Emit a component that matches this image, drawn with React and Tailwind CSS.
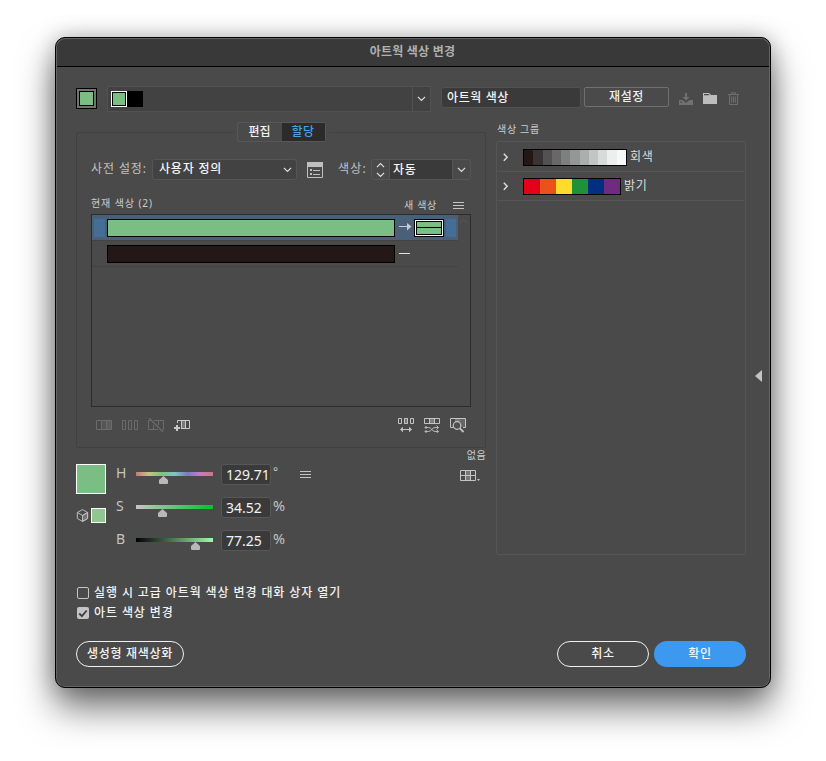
import React, { useState } from 'react';
import clsx from 'clsx';

const GRAYS = ['#231815', '#383433', '#535152', '#686868', '#7f7f7f', '#959696', '#acadad', '#c3c4c4', '#d9dada', '#eeeeee', '#f7f8f8']
const BRIGHTS = ['#e50019', '#e9531a', '#ffdc2b', '#1e9139', '#002e82', '#6f2b7f']

const Chevron = ({ className }) => (
      <svg className={className} width="9" height="6" viewBox="0 0 9 6" fill="none" stroke="currentColor" strokeWidth="1.2">
            <path d="M0.9 0.9 4.5 4.5 8.1 0.9" />
      </svg>
)

const MenuIcon = ({ className }) => (
      <svg className={className} width="11" height="7" viewBox="0 0 11 7" stroke="#c4c4c4" strokeWidth="1">
            <path d="M0 .5H11M0 3.5H11M0 6.5H11" />
      </svg>
)

const Slider = ({ bar, left }) => (
      <div className="w-[77px] shrink-0">
            <div className={clsx('h-1', bar)}></div>
            <svg className="block" style={{ marginLeft: left }} width="9" height="8" viewBox="0 0 9 8" fill="#b9b9b9">
                  <path d="M4.5 0 9 4V7Q9 8 8 8H1Q0 8 0 7V4Z" />
            </svg>
      </div>
)

const ChannelRow = ({ label, bar, left, value, unit }) => (
      <div className="flex h-[33px] items-start">
            <span className="w-[19px] shrink-0 text-[14px] leading-[18px] text-[#c4c4c4]">{label}</span>
            <div className="w-[86px] pt-2 pl-px"><Slider bar={bar} left={left} /></div>
            <div className="h-[21px] w-[50px] rounded-[3px] border border-[#575757] bg-[#3a3a3a] pl-[4px] text-[14px] leading-[19px] whitespace-nowrap text-[#f2f2f2]">{value}</div>
            <span className={clsx('pl-[2px] text-[#c4c4c4]', unit === '°' ? 'text-[12px] leading-[15px]' : 'text-[14.5px] leading-[17px]')}>{unit}</span>
      </div>
)

const Palette = ({ colors, width, label, swatch }) => (
      <div className="mr-px flex items-start border-b border-[#555555] first:h-[30px] first:pt-[7px] last:h-[29px] last:pt-[6px]">
            <svg className="mt-1 ml-[6px] w-5 shrink-0" width="20" height="9" viewBox="0 0 20 9" fill="none" stroke="#e0e0e0" strokeWidth="1.4">
                  <path d="M0.8 0.8 4.2 4.3 0.8 7.8" />
            </svg>
            <div className={clsx('flex h-[17px] shrink-0 border border-black', width)}>
                  {colors.map((c) => <span key={c} className={clsx('h-full', swatch)} style={{ background: c }}></span>)}
            </div>
            <span className="pl-[3px] text-[12px] leading-[15px] tracking-[0.6px] text-[#dedede]">{label}</span>
      </div>
)

const AssignTools = () => (
      <div className="flex h-4 justify-between pl-[5px] pr-[5px]">
            <div className="mt-px flex gap-[10px] text-[#6b6b6b]">
                  <svg width="16" height="16" viewBox="0 0 16 16" fill="none" stroke="currentColor">
                        <rect x="5" y="3" width="5" height="9" fill="#555" stroke="none" />
                        <rect x="10" y="3" width="5" height="9" fill="#5d5d5d" stroke="none" />
                        <path d="M.5 2.5H15.5V11.5H.5ZM5.5 3V11M10.5 3V11" />
                  </svg>
                  <svg width="16" height="16" viewBox="0 0 16 16" fill="none" stroke="currentColor">
                        <path d="M.5 2.5H3.5V11.5H.5ZM6.5 2.5H9.5V11.5H6.5ZM12.5 2.5H15.5V11.5H12.5Z" />
                  </svg>
                  <svg width="16" height="16" viewBox="0 0 16 16" fill="none" stroke="currentColor">
                        <path d="M3 2.5H.5V11.5H10M6 2.5H15.5V11.5H14M5.5 7V11M10.5 3V7" />
                        <path d="M1 0 15 14" strokeWidth="1.3" />
                  </svg>
                  <svg width="16" height="16" viewBox="0 0 16 16" fill="none" stroke="#c9c9c9">
                        <rect x="8" y="3" width="4" height="8" fill="#777" stroke="none" />
                        <path d="M3.500 5V2.500H15.500V10.500H7M7.500 3V10M11.500 3V10" />
                        <path d="M3 7V13M0 10H6" strokeWidth="2" />
                  </svg>
            </div>
            <div className="flex gap-[10px]">
                  <svg width="16" height="16" viewBox="0 0 16 16" fill="none" stroke="#c4c4c4">
                        <rect x="6" y="1" width="4" height="6" fill="#777" stroke="none" />
                        <path d="M.5 1.500H3.500V6.500H.5ZM6.500 1.500H9.500V6.500H6.500ZM12.500 1.500H15.500V6.500H12.500Z" />
                        <path d="M4 12.500H12" />
                        <path d="M2 12.500 5 9.800V15.200ZM14 12.500 11 9.800V15.200Z" fill="#c4c4c4" stroke="none" />
                  </svg>
                  <svg width="16" height="16" viewBox="0 0 16 16" fill="none" stroke="#c4c4c4">
                        <rect x="5" y="2" width="6" height="5" fill="#7d7d7d" stroke="none" />
                        <path d="M.5 1.500H15.500V6.500H.5ZM5.500 2V6M10.500 2V6" />
                        <path d="M1 10.500H4.500C7.500 10.500 8 14.500 11 14.500H14M1 14.500H4.500C7.500 14.500 8 10.500 11 10.500H14M12.500 8.500 14.500 10.500 12.500 12.300M12.500 12.700 14.500 14.500 12.500 16M2.500 9 1 10.500 2.500 12M2.500 13 1 14.500 2.500 16" strokeWidth=".9" />
                  </svg>
                  <svg width="16" height="16" viewBox="0 0 16 16" fill="none" stroke="#c4c4c4">
                        <rect x="10" y="2" width="5" height="8" fill="#666" stroke="none" />
                        <rect x="5" y="1" width="5" height="5" fill="#777" stroke="none" />
                        <path d="M3 10.500H.5V1.500H15.500V10.500H13" />
                        <circle cx="7" cy="8.500" r="3.800" fill="#505050" strokeWidth="1.200" />
                        <path d="M9.700 11.200 13.500 15" strokeWidth="1.800" />
                  </svg>
            </div>
      </div>
)

const CurrentColors = () => (
      <div className="mt-[2px] flex h-[193px] justify-between border border-[#2c2c2c]">
            <div className="w-[366px]">
                  <div className="flex h-[26px] items-center border-b border-[#434343] bg-[#4a6078] pl-[2px]">
                        <span className="h-[18px] w-[11px] bg-[#446e96]"></span>
                        <span className="ml-[2px] h-[18px] w-[288px] border border-black bg-[#7bbe83]"></span>
                        <svg className="mb-[2px] ml-1" width="13" height="8" viewBox="0 0 13 8">
                              <path d="M0 3.500H9" stroke="#c9c9c9" />
                              <path d="M8 0 12.500 3.600 8 7.500Z" fill="#c9c9c9" />
                        </svg>
                        <span className="ml-[2px] flex h-[18px] w-[30px] border border-black bg-white p-px">
                              <span className="flex flex-1 flex-col gap-px border border-black bg-black">
                                    <span className="flex-1 bg-[#7bbe83]"></span>
                                    <span className="flex-1 bg-[#7bbe83]"></span>
                              </span>
                        </span>
                        <span className="ml-[2px] h-[18px] w-[10px] bg-[#446e96]"></span>
                  </div>
                  <div className="flex h-[26px] items-center border-b border-[#434343] pl-[15px]">
                        <span className="h-[18px] w-[288px] border border-black bg-[#231815]"></span>
                        <span className="mb-px ml-1 h-px w-[11px] bg-[#e0e0e0]"></span>
                  </div>
            </div>
            <Chevron className="mt-[3px] mr-[2px] rotate-180 text-[#545454]" />
      </div>
)

const TopBar = () => (
      <div className="flex h-[26px] items-start">
            <div className="mt-[2px] h-[21px] w-[21px] border border-black bg-[#737373] p-[2px]">
                  <div className="h-full border border-black bg-[#7bbe83]"></div>
            </div>
            <div className="ml-[10px] flex h-[26px] w-[324px] border border-[#525252] bg-[#424242]">
                  <div className="flex flex-1 items-center pl-[3px]">
                        <span className="h-4 w-4 border border-white bg-black p-px"><span className="block h-full bg-[#7bbe83]"></span></span>
                        <span className="h-4 w-4 bg-black"></span>
                  </div>
                  <div className="flex w-[18px] items-center justify-center border-l border-[#525252] text-[#dedede]"><Chevron /></div>
            </div>
            <div className="mt-px ml-[10px] h-[21px] w-[140px] rounded-[3px] border border-[#525252] bg-[#3a3a3a] pl-[5px] text-[12px] leading-[19px] font-medium tracking-[0.6px] text-[#f5f5f5]">아트웍 색상</div>
            <button className="mt-px ml-[3px] h-5 w-[85px] rounded-[2px] border border-[#707070] text-[12px] leading-[16px] font-medium tracking-[0.6px] text-[#f0f0f0]">재설정</button>
            <svg className="mt-[6px] ml-[10px]" width="14" height="13" viewBox="0 0 14 13" fill="#717171">
                  <path d="M6 1H8V5H10.500L7 8.500 3.500 5H6ZM0 8H3.500L7 11 10.500 8H14V13H0ZM1.500 9.500V11H3V9.500Z" fillRule="evenodd" />
            </svg>
            <svg className="mt-[6px] ml-[10px]" width="14" height="13" viewBox="0 0 14 13" fill="#bdbdbd">
                  <path d="M0 1H6L8 3H14V12H0ZM1 2V3.200H6.500L5.500 2Z" fillRule="evenodd" />
            </svg>
            <svg className="mt-[6px] ml-[11px]" width="11" height="13" viewBox="0 0 11 13" fill="none" stroke="#6e6e6e">
                  <path d="M0 2.500H11M3.500 2V.8H7.500V2M1.500 3V12.500H9.500V3M3.700 4.500V10.800M5.500 4.500V10.800M7.300 4.500V10.800" />
            </svg>
      </div>
)

const App = () => {

      const [openOnLaunch, setOpenOnLaunch] = useState(false)
      const [recolorArt, setRecolorArt] = useState(true)

      const options = [
            { label: '실행 시 고급 아트웍 색상 변경 대화 상자 열기', checked: openOnLaunch, toggle: setOpenOnLaunch },
            { label: '아트 색상 변경', checked: recolorArt, toggle: setRecolorArt },
      ]

      return (
            <div className="h-[761px] w-[826px] overflow-hidden bg-white pt-[37px] pl-[55px] font-['Noto_Sans','Noto_Sans_CJK_KR',sans-serif]">
                  <div className="h-[651px] w-[716px] overflow-hidden rounded-[10px] border border-black bg-[#4a4a4a] shadow-[inset_0_0_0_1px_#646464,0_20px_36px_rgba(0,0,0,0.55),0_0_22px_rgba(0,0,0,0.25)]">
                        <h1 className="mx-px mt-px h-7 rounded-t-[9px] border-b border-black bg-[#393939] pr-px text-center text-[12px] leading-[25px] font-bold tracking-[0.2px] text-[#b0b0b0]">아트웍 색상 변경</h1>

                        <div className="flex">
                              <div className="w-[690px] pt-[19px] pl-5">
                                    <TopBar />

                                    <div className="flex h-[443px] gap-[10px]">
                                          <div className="w-[410px] pt-[10px]">
                                                <fieldset className="h-[326px] rounded-[2px] border border-[#414141] px-[14px]">
                                                      <legend className="mx-auto px-[3px]">
                                                            <div className="flex h-5 w-[89px] rounded-[2px] border border-[#575757] text-[12px] leading-[17px] font-medium">
                                                                  <span className="w-11 text-center text-[#f0f0f0]">편집</span>
                                                                  <span className="flex-1 bg-[#2b2b2b] text-center tracking-[0.5px] text-[#4a9fe6]">할당</span>
                                                            </div>
                                                      </legend>

                                                      <div className="mt-[17px] flex h-[21px] items-center text-[12px]">
                                                            <span className="w-[61px] shrink-0 pb-[2px] leading-[17px] tracking-[0.9px] whitespace-nowrap text-[#c2c2c2]">사전 설정:</span>
                                                            <div className="flex h-[21px] w-[145px] items-center justify-between rounded-[3px] border border-[#555555] bg-[#424242] pr-[4px] pl-[6px] text-[#dedede]">
                                                                  <span className="pb-[3px] leading-[17px] font-medium tracking-[0.8px] text-[#f5f5f5]">사용자 정의</span>
                                                                  <Chevron />
                                                            </div>
                                                            <svg className="ml-[10px]" width="16" height="16" viewBox="0 0 16 16" fill="none" stroke="#bfbfbf">
                                                                  <path d="M.5 .5H15.500V15.500H.5Z" />
                                                                  <path d="M0 0H16V5H0ZM3 7H5V9H3ZM3 11H5V13H3Z" fill="#bfbfbf" stroke="none" />
                                                                  <path d="M6 8.500H13M6 12.500H13" />
                                                            </svg>
                                                            <span className="ml-[15px] w-[33px] pb-[2px] leading-[17px] tracking-[1.2px] whitespace-nowrap text-[#c2c2c2]">색상:</span>
                                                            <div className="flex h-[21px] w-[100px] rounded-[3px] border border-[#555555] text-[#dedede]">
                                                                  <div className="flex w-[18px] flex-col items-center justify-center gap-1 border-r border-[#555555]">
                                                                        <Chevron className="rotate-180" />
                                                                        <Chevron />
                                                                  </div>
                                                                  <span className="flex-1 bg-[#3a3a3a] pl-[3px] leading-[19px] font-medium tracking-[0.8px] text-[#f5f5f5]">자동</span>
                                                                  <div className="flex w-[18px] items-center justify-center border-l border-[#555555] pr-px"><Chevron /></div>
                                                            </div>
                                                      </div>

                                                      <div className="mt-[14px] flex h-[18px] text-[10px] text-[#cccccc]">
                                                            <span className="leading-[18px] tracking-[0.9px]">현재 색상 (2)</span>
                                                            <span className="ml-auto leading-[22px] tracking-[0.7px]">새 색상</span>
                                                            <MenuIcon className="mt-2 mr-[7px] ml-[16px]" />
                                                      </div>

                                                      <CurrentColors />
                                                      <div className="h-[10px]"></div>
                                                      <AssignTools />
                                                </fieldset>

                                                <div className="flex h-[107px]">
                                                      <div className="w-10 pt-4">
                                                            <div className="h-[30px] w-[30px] border border-white bg-[#7bbe83]"></div>
                                                            <div className="mt-[14px] flex items-center gap-[2px]">
                                                                  <svg width="13" height="13" viewBox="0 0 13 13" fill="none" stroke="#bdbdbd" strokeWidth="1">
                                                                        <path d="M6.500 6.500V12.500L11.500 9.500V3.500Z" fill="#737373" />
                                                                        <path d="M6.500 .6 11.700 3.500V9.500L6.500 12.400 1.300 9.500V3.500ZM1.300 3.500 6.500 6.400 11.700 3.500M6.500 6.400V12.400" />
                                                                  </svg>
                                                                  <div className="h-[15px] w-[15px] border border-white bg-[#91c592]"></div>
                                                            </div>
                                                      </div>
                                                      <div className="w-[184px] pt-4">
                                                            <ChannelRow label="H" left={23} value="129.71" unit="°" bar="bg-[linear-gradient(90deg,#c57b7b,#c5c57b_17%,#7bc57b_33%,#7bc5c5_50%,#7b7bc5_67%,#c57bc5_83%,#c57b7b)]" />
                                                            <ChannelRow label="S" left={22} value="34.52" unit="%" bar="bg-[linear-gradient(90deg,#c5c5c5,#00c520)]" />
                                                            <ChannelRow label="B" left={55} value="77.25" unit="%" bar="bg-[linear-gradient(90deg,#000,#a2f8ac)]" />
                                                      </div>
                                                      <MenuIcon className="mt-[23px]" />
                                                      <div className="ml-auto flex flex-col items-end">
                                                            <span className="text-[10px] leading-[14px] tracking-[0.4px] text-[#cccccc]">없음</span>
                                                            <svg className="mt-2 mr-[5px]" width="21" height="12" viewBox="0 0 21 12" fill="none" stroke="#c4c4c4">
                                                                  <path d="M5 0H11V11H5Z" fill="#777" stroke="none" />
                                                                  <path d="M.5 .5H15.500V10.500H.5ZM5.500 0V11M10.500 0V11M0 5.500H16" />
                                                                  <path d="M17 9H20L18.500 11Z" fill="#c4c4c4" stroke="none" />
                                                            </svg>
                                                      </div>
                                                </div>
                                          </div>

                                          <div className="w-[250px] pt-[10px]">
                                                <h2 className="h-[19px] pl-px text-[10px] leading-[15px] tracking-[0.7px] text-[#cccccc]">색상 그룹</h2>
                                                <div className="h-[414px] rounded-[2px] border border-[#555555]">
                                                      <Palette colors={GRAYS} width="w-[104px]" swatch="w-[9.28px]" label="회색" />
                                                      <Palette colors={BRIGHTS} width="w-[98px]" swatch="w-4" label="밝기" />
                                                </div>
                                          </div>
                                    </div>

                                    <div className="flex flex-col gap-[2px] pt-[29px] pl-px text-[12px] font-medium tracking-[0.9px] text-[#f2f2f2]">
                                          {
                                                options.map((option) => (
                                                      <div key={option.label} onClick={() => option.toggle(!option.checked)} className="flex h-[18px] cursor-pointer items-center">
                                                            <span className={clsx('flex h-3 w-3 items-center justify-center rounded-[2px]', option.checked ? 'bg-[#c4c4c4]' : 'border border-[#c4c4c4]')}>
                                                                  {option.checked && <svg width="10" height="9" viewBox="0 0 10 9" fill="none" stroke="#3f3f3f" strokeWidth="1.8"><path d="M1.200 4.500 3.900 7.200 8.700 1.500" /></svg>}
                                                            </span>
                                                            <span className="pb-px pl-[5px] leading-[17px]">{option.label}</span>
                                                      </div>
                                                ))
                                          }
                                    </div>

                                    <div className="mt-[19px] flex h-[26px] text-[12px] leading-[24px] font-medium tracking-[0.7px] text-[#f5f5f5]">
                                          <button className="w-[108px] rounded-full border border-[#f0f0f0] whitespace-nowrap">생성형 재색상화</button>
                                          <button className="ml-auto w-[92px] rounded-full border border-[#f0f0f0]">취소</button>
                                          <button className="ml-[5px] w-[92px] rounded-full bg-[#3d99f0]">확인</button>
                                    </div>
                              </div>

                              <svg className="mt-[303px] ml-[9px]" width="7" height="12" viewBox="0 0 7 12" fill="#c4c4c4">
                                    <path d="M7 0V12L0 6Z" />
                              </svg>
                        </div>
                  </div>
            </div>
      );
};

export default App;
